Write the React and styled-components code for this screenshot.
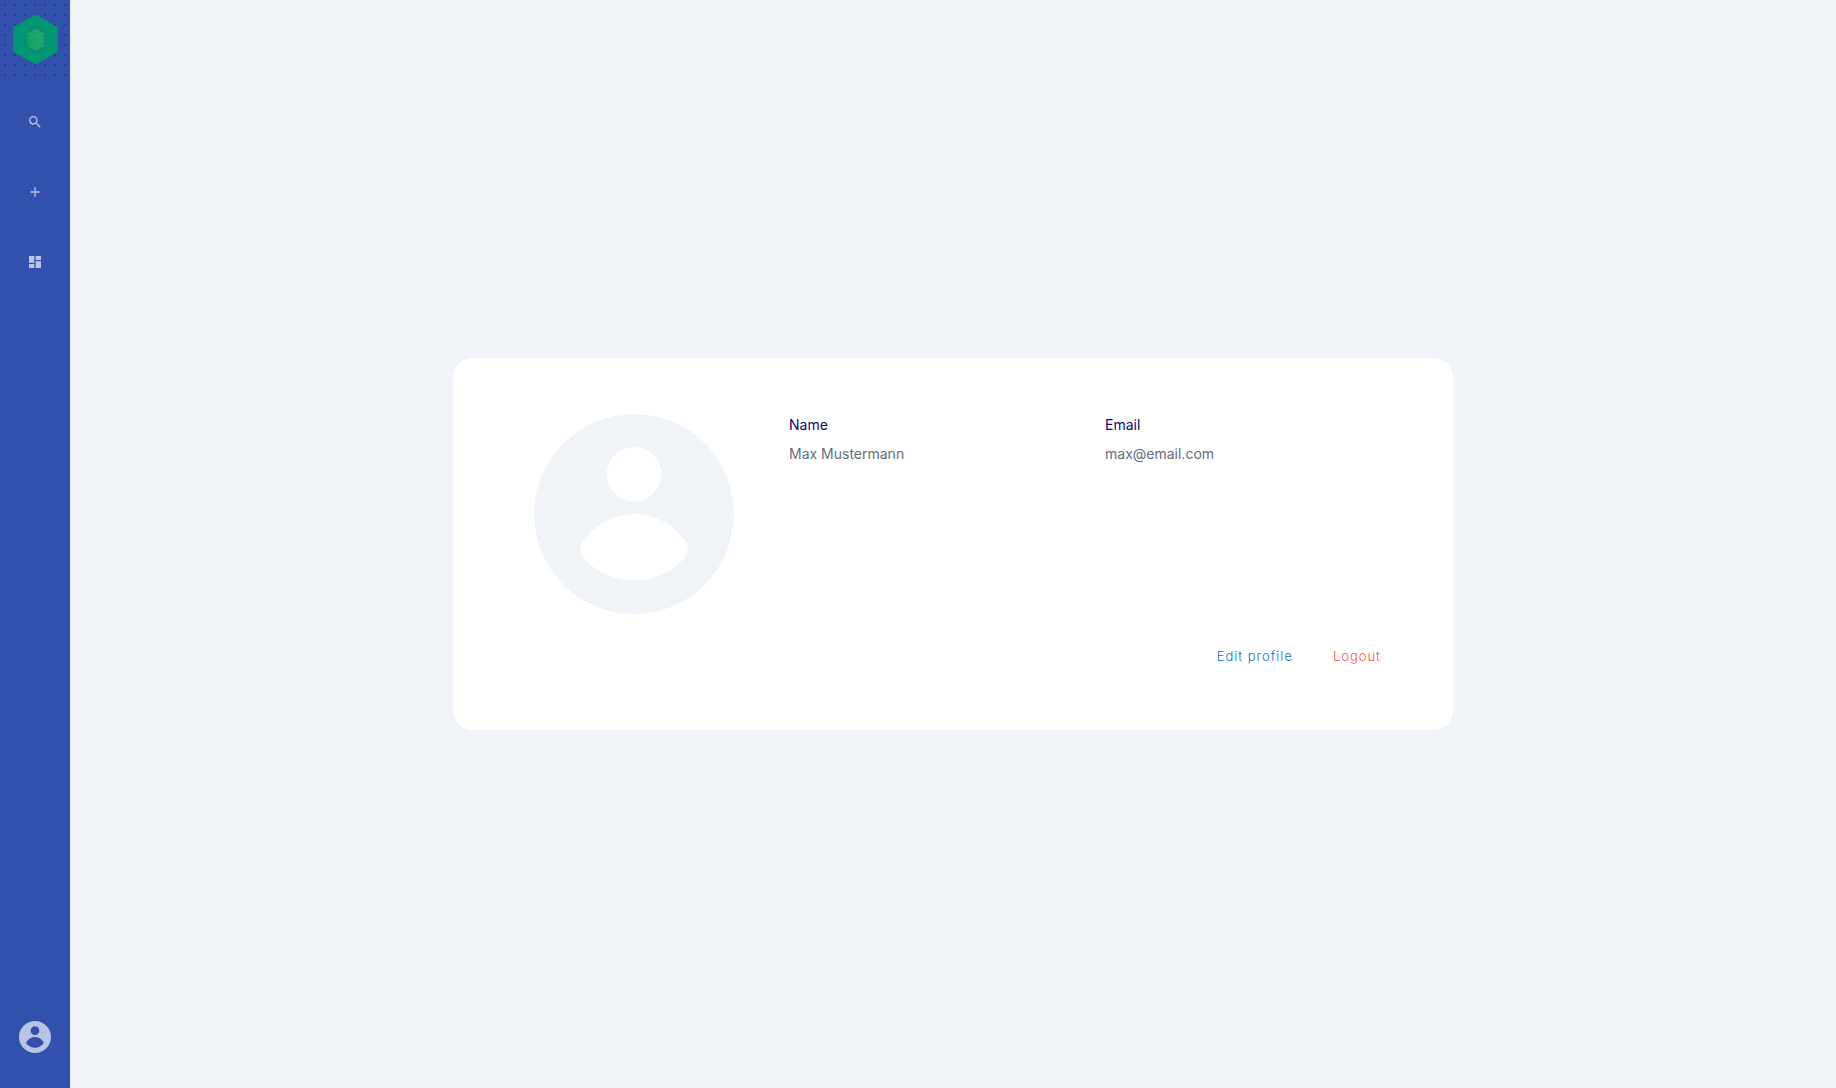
import React from "react";
import styled, { createGlobalStyle } from "styled-components";
import { MdSearch, MdAdd, MdDashboard } from "react-icons/md";

const GlobalStyle = createGlobalStyle`
  *, *::before, *::after { box-sizing: border-box; }
  body {
    margin: 0;
    background: #f0f4f8;
    font-family: Inter, "Liberation Sans", sans-serif;
  }
`;

const Page = styled.div`
  display: flex;
  min-height: 100vh;
`;

const Sidebar = styled.nav`
  display: flex;
  flex: 0 0 70px;
  flex-direction: column;
  background: #3251ad;
`;

const HomeLink = styled.a`
  display: block;
`;

const LogoDrawing = styled.svg`
  display: block;
  width: 70px;
  height: 80px;
`;

const MenuList = styled.ul`
  display: flex;
  flex: 1;
  flex-direction: column;
  margin: 0;
  padding: 7px 0 0;
  list-style: none;
`;

const MenuButton = styled.button`
  display: flex;
  align-items: center;
  justify-content: center;
  width: 100%;
  height: ${({ $tall }) => ($tall ? "102px" : "70px")};
  padding: 0;
  border: 0;
  background: transparent;
  color: #bac5e5;
  font-size: 16px;
  cursor: pointer;
`;

const Main = styled.main`
  display: flex;
  flex: 1;
  align-items: center;
  justify-content: center;
`;

const Card = styled.section`
  display: flex;
  flex-direction: column;
  gap: 24px;
  width: 100%;
  max-width: 1000px;
  padding: 56px 32px 56px 81px;
  border-radius: 20px;
  background: #fff;
`;

const Profile = styled.div`
  display: flex;
  gap: 55px;
`;

const Details = styled.dl`
  display: grid;
  flex: 1;
  grid-template-columns: repeat(2, 1fr);
  align-content: start;
  margin: 0;
  font-size: 14px;
  line-height: 22px;
`;

const Label = styled.dt`
  color: #10086a;
`;

const Value = styled.dd`
  margin: 7px 0 0;
  color: #656d80;
`;

const Actions = styled.div`
  display: flex;
  justify-content: flex-end;
  padding-right: 20px;
`;

const TextButton = styled.button`
  height: 36px;
  padding: 0 20px;
  border: 0;
  background: transparent;
  color: ${({ $danger }) => ($danger ? "#ff4d4f" : "#1070d0")};
  font-family: inherit;
  font-size: 13px;
  font-weight: 300;
  letter-spacing: 1px;
  cursor: pointer;
`;

function Logo() {
  return (
    <LogoDrawing viewBox="0 0 70 80" aria-hidden="true">
      <defs>
        <pattern id="dots" width="10" height="10" patternUnits="userSpaceOnUse">
          <rect x="4" y="4" width="2" height="2" fill="#293d7c" />
        </pattern>
        <linearGradient id="layer" x1="0" x2="1" y1="0" y2="1">
          <stop offset="0" stopColor="#109a6b" />
          <stop offset="1" stopColor="#25ae68" />
        </linearGradient>
        <radialGradient id="shade">
          <stop offset="0.5" stopColor="#058a6a" />
          <stop offset="1" stopColor="#058a6a" stopOpacity="0" />
        </radialGradient>
      </defs>
      <rect width="70" height="80" fill="url(#dots)" />
      <path
        d="M35.5 15.5 L57 27.5 V51.5 L35.5 63.5 L14 51.5 V27.5 Z"
        fill="#039674"
        stroke="#039674"
        strokeWidth="1.5"
        strokeLinejoin="round"
      />
      <ellipse cx="35.5" cy="39.5" rx="14" ry="15" fill="url(#shade)" />
      {[45, 41.5, 38, 34].map((y) => (
        <path
          key={y}
          d={`M35.5 ${y - 6} L45.5 ${y} L35.5 ${y + 6} L25.5 ${y} Z`}
          fill="url(#layer)"
          stroke="#0b8f69"
          strokeWidth="0.4"
        />
      ))}
    </LogoDrawing>
  );
}

function Avatar({ size, color }) {
  return (
    <svg width={size} height={size} viewBox="0 0 200 200" fill={color} aria-hidden="true">
      <path
        fillRule="evenodd"
        d="M100 0a100 100 0 1 1 0 200a100 100 0 1 1 0-200Z
           M100 33a27.3 27.3 0 1 0 0 54.6a27.3 27.3 0 1 0 0-54.6Z
           M48 129A61 61 0 0 1 152 129Q156 136 151 143.500A68 68 0 0 1 49 143.500Q44 136 48 129Z"
      />
    </svg>
  );
}

const menu = [
  { label: "Search", Icon: MdSearch },
  { label: "Add", Icon: MdAdd },
  { label: "Dashboard", Icon: MdDashboard },
];

const details = [
  { label: "Name", value: "Max Mustermann" },
  { label: "Email", value: "max@email.com" },
];

export default function App() {
  return (
    <Page>
      <GlobalStyle />
      <Sidebar>
        <HomeLink href="#" aria-label="Home">
          <Logo />
        </HomeLink>
        <MenuList>
          {menu.map(({ label, Icon }) => (
            <li key={label}>
              <MenuButton type="button" aria-label={label}>
                <Icon />
              </MenuButton>
            </li>
          ))}
        </MenuList>
        <MenuButton type="button" aria-label="Profile" $tall>
          <Avatar size={32} color="#bac5e5" />
        </MenuButton>
      </Sidebar>
      <Main>
        <Card>
          <Profile>
            <Avatar size={200} color="#f0f4f8" />
            <Details>
              {details.map(({ label, value }) => (
                <div key={label}>
                  <Label>{label}</Label>
                  <Value>{value}</Value>
                </div>
              ))}
            </Details>
          </Profile>
          <Actions>
            <TextButton type="button">Edit profile</TextButton>
            <TextButton type="button" $danger>
              Logout
            </TextButton>
          </Actions>
        </Card>
      </Main>
    </Page>
  );
}
